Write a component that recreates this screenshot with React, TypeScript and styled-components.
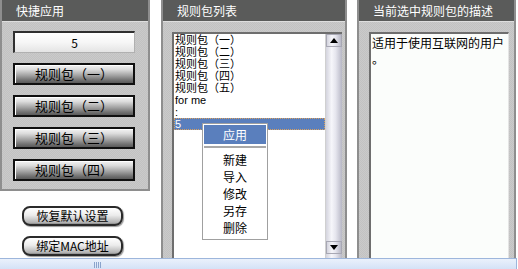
import React from "react"
import styled, { createGlobalStyle, css } from "styled-components"

const GlobalStyle = createGlobalStyle`
  html, body {
    margin: 0;
    padding: 0;
    background: #ffffff;
    font-family: "Noto Sans CJK SC", "DejaVu Sans", sans-serif;
    overflow: hidden;
  }
`

const colors = {
  header: "#5a5b5a",
  body: "#c6c6c6",
  border: "#8e8e8e",
  select: "#5a7fbd",
}

const dither = css`
  background: repeating-conic-gradient(#c2c2c2 0 25%, #cacaca 0 50%) 0 0 / 2px
    2px;
`

const listItems = [
  "规则包（一）",
  "规则包（二）",
  "规则包（三）",
  "规则包（四）",
  "规则包（五）",
  "for me",
  ":",
  "5",
]

const quickButtons = ["规则包（一）", "规则包（二）", "规则包（三）", "规则包（四）"]

const menuItems = ["新建", "导入", "修改", "另存", "删除"]

const App = () => {
  return (
    <Page>
      <GlobalStyle />
      <Main>
        <LeftColumn>
          <Panel $width={150} $closed>
            <PanelHeader>快捷应用</PanelHeader>
            <QuickBody>
              <ValueBox>5</ValueBox>
              {quickButtons.map((label) => (
                <MetalButton key={label}>{label}</MetalButton>
              ))}
            </QuickBody>
          </Panel>
          <ActionGroup>
            <PillButton>恢复默认设置</PillButton>
            <PillButton>绑定MAC地址</PillButton>
          </ActionGroup>
        </LeftColumn>

        <Panel $width={186} $gap={11}>
          <PanelHeader>规则包列表</PanelHeader>
          <ListBody>
            <ListBox>
              <ListItems>
                {listItems.map((item, i) => (
                  <ListItem key={i} $selected={i === listItems.length - 1}>
                    {item}
                  </ListItem>
                ))}
              </ListItems>
              <Scrollbar>
                <ArrowButton>
                  <Triangle $up />
                </ArrowButton>
                <Track />
                <ArrowButton>
                  <Triangle />
                </ArrowButton>
                <TrackTail />
              </Scrollbar>
              <ContextMenu>
                <MenuItem $active>应用</MenuItem>
                <MenuSeparator />
                {menuItems.map((item) => (
                  <MenuItem key={item}>{item}</MenuItem>
                ))}
              </ContextMenu>
            </ListBox>
          </ListBody>
        </Panel>

        <Panel $width={159} $gap={10}>
          <PanelHeader>当前选中规则包的描述</PanelHeader>
          <DescBody>
            <DescBox>适用于使用互联网的用户。</DescBox>
          </DescBody>
        </Panel>
      </Main>
      <BottomBar>
        <Grip>
          <span />
          <span />
          <span />
          <span />
        </Grip>
      </BottomBar>
    </Page>
  )
}

const Page = styled.div`
  width: 518px;
  height: 269px;
  display: flex;
  flex-direction: column;
`

const Main = styled.div`
  display: flex;
  height: 258px;
`

const LeftColumn = styled.div`
  display: flex;
  flex-direction: column;
  width: 150px;
`

const Panel = styled.section<{ $width: number; $gap?: number; $closed?: boolean }>`
  box-sizing: border-box;
  width: ${(p) => p.$width}px;
  margin-left: ${(p) => p.$gap || 0}px;
  display: flex;
  flex-direction: column;
  border-left: 2px solid ${colors.border};
  border-right: 2px solid ${colors.border};
  ${(p) => p.$closed && `border-bottom: 2px solid ${colors.border};`}
  ${dither}
`

const PanelHeader = styled.div`
  height: 21px;
  line-height: 21px;
  padding-left: 14px;
  font-size: 12px;
  color: #ffffff;
  background: ${colors.header};
  border-bottom: 1px solid #dedede;
  white-space: nowrap;
`

const QuickBody = styled.div`
  display: flex;
  flex-direction: column;
  gap: 10px;
  padding: 9px 13px 8px 11px;
`

const ValueBox = styled.div`
  box-sizing: border-box;
  height: 22px;
  line-height: 19px;
  text-align: center;
  font-size: 12px;
  color: #000;
  border-top: 2px solid #303030;
  border-left: 2px solid #303030;
  border-right: 1px solid #b0b0b0;
  border-bottom: 1px solid #b0b0b0;
  background: linear-gradient(#ffffff, #f6f6f6 50%, #e4e4e4);
`

const MetalButton = styled.button`
  box-sizing: border-box;
  height: 22px;
  padding: 0;
  font-family: inherit;
  font-size: 13px;
  line-height: 18px;
  color: #000;
  border: 2px solid #101010;
  box-shadow: inset 1px 1px 0 #ffffff;
  background: linear-gradient(#f4f4f4 0%, #dcdcdc 25%, #a8a8a8 55%, #707070 85%, #5a5a5a);
`

const ActionGroup = styled.div`
  display: flex;
  flex-direction: column;
  gap: 10px;
  margin-top: 15px;
  padding-left: 22px;
`

const PillButton = styled.button`
  box-sizing: border-box;
  width: 101px;
  height: 20px;
  padding: 0;
  font-family: inherit;
  font-size: 12px;
  line-height: 14px;
  color: #000;
  border: 2px solid #2a2a2a;
  border-radius: 8px;
  background: linear-gradient(#ffffff, #ececec 45%, #b4b4b4 90%, #8a8a8a);
  box-shadow: 1px 1px 1px #9a9a9a;
`

const ListBody = styled.div`
  flex: 1;
  display: flex;
  padding: 10px 3px 0 9px;
  min-height: 0;
`

const ListBox = styled.div`
  position: relative;
  flex: 1;
  display: flex;
  background: #ffffff;
  border-top: 2px solid #6e6e6e;
  border-left: 2px solid #6e6e6e;
`

const ListItems = styled.div`
  flex: 1;
`

const ListItem = styled.div<{ $selected?: boolean }>`
  box-sizing: border-box;
  height: 12px;
  line-height: 12px;
  font-family: "Liberation Sans", "Noto Sans CJK SC", sans-serif;
  font-size: 11px;
  padding-left: 1px;
  white-space: nowrap;
  color: ${(p) => (p.$selected ? "#ffffff" : "#000000")};
  background: ${(p) => (p.$selected ? colors.select : "transparent")};
  ${(p) => p.$selected && "outline: 1px dotted #d8a060; outline-offset: -1px;"}
`

const Scrollbar = styled.div`
  width: 16px;
  display: flex;
  flex-direction: column;
  border-left: 1px solid #d0d0d0;
`

const scrollFace = css`
  background: linear-gradient(to right, #d4d4de, #f6f6fa 35%, #e6e6ee 60%, #b8b8c6);
`

const ArrowButton = styled.div`
  box-sizing: border-box;
  height: 13px;
  display: flex;
  align-items: center;
  justify-content: center;
  border: 1px solid #a8a8b4;
  ${scrollFace}
`

const Triangle = styled.div<{ $up?: boolean }>`
  width: 0;
  height: 0;
  border-left: 4px solid transparent;
  border-right: 4px solid transparent;
  ${(p) =>
    p.$up ? "border-bottom: 5px solid #000;" : "border-top: 5px solid #000;"}
`

const Track = styled.div`
  flex: 1;
  ${scrollFace}
`

const TrackTail = styled.div`
  height: 4px;
  ${scrollFace}
`

const ContextMenu = styled.div`
  position: absolute;
  left: 28px;
  top: 89px;
  box-sizing: border-box;
  width: 66px;
  padding: 1px 1px 3px;
  background: #ffffff;
  border: 1px solid #a0a0a0;
`

const MenuItem = styled.div<{ $active?: boolean }>`
  height: ${(p) => (p.$active ? 19 : 17)}px;
  line-height: ${(p) => (p.$active ? 19 : 17)}px;
  text-align: center;
  font-size: 12px;
  color: ${(p) => (p.$active ? "#ffffff" : "#000000")};
  background: ${(p) => (p.$active ? colors.select : "transparent")};
`

const MenuSeparator = styled.div`
  height: 2px;
  margin: 2px 0 3px;
  background: #a8a8a8;
`

const DescBody = styled.div`
  flex: 1;
  display: flex;
  padding: 10px 5px 0 10px;
`

const DescBox = styled.div`
  flex: 1;
  box-sizing: border-box;
  padding: 1px 1px;
  font-size: 12px;
  line-height: 16px;
  color: #000;
  background: #fbfdfb;
  border-top: 2px solid #6e6e6e;
  border-left: 2px solid #6e6e6e;
  border-right: 1px solid #e4e4e4;
  word-break: break-all;
  line-break: anywhere;
`

const BottomBar = styled.div`
  box-sizing: border-box;
  width: 517px;
  height: 11px;
  display: flex;
  align-items: flex-end;
  padding-left: 94px;
  border-top: 1px solid #9db6dc;
  border-right: 1px solid #9db6dc;
  background: linear-gradient(#eaf1fb, #d4e2f6);
`

const Grip = styled.div`
  display: flex;
  gap: 1px;
  height: 6px;
  margin-bottom: 1px;

  span {
    width: 1px;
    background: #8aa4cc;
  }
`

export default App
